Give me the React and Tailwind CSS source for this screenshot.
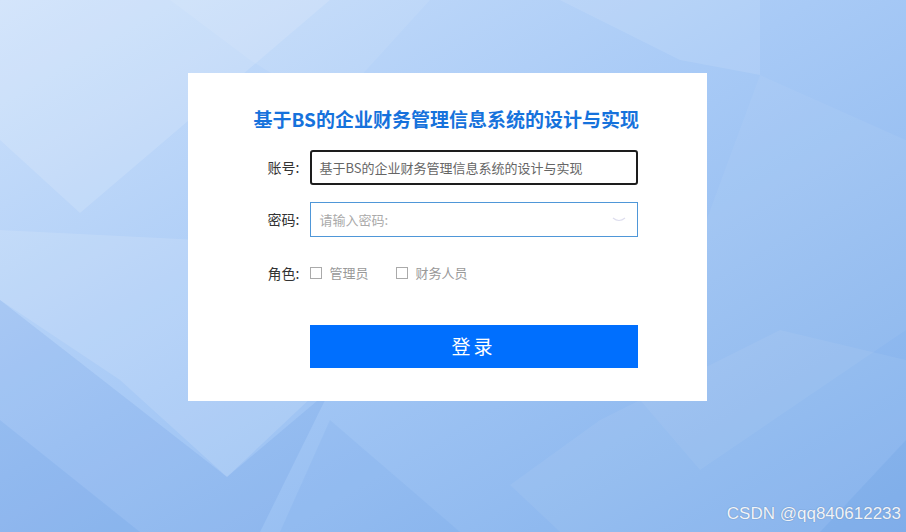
import React, { useState } from 'react';

const font = { fontFamily: '"Noto Sans CJK SC", "Noto Sans", sans-serif' };

function Backdrop() {
  return (
    <svg className="absolute inset-0 w-full h-full" viewBox="0 0 906 532" preserveAspectRatio="none">
      <defs>
        <linearGradient id="bg" x1="0" y1="0" x2="1" y2="1">
          <stop offset="0" stopColor="#cde1fb" />
          <stop offset="0.45" stopColor="#a8caf6" />
          <stop offset="1" stopColor="#80afeb" />
        </linearGradient>
      </defs>
      <rect width="906" height="532" fill="url(#bg)" />
      {/* light facets */}
      <polygon points="0,0 330,0 80,213 0,140" fill="#ffffff" opacity="0.14" />
      <polygon points="170,0 430,0 330,110 250,60" fill="#ffffff" opacity="0.08" />
      <polygon points="560,0 760,0 760,75 680,60" fill="#ffffff" opacity="0.1" />
      <polygon points="0,300 120,380 227,477 330,380 330,300 200,240 0,230" fill="#ffffff" opacity="0.12" />
      <polygon points="0,300 227,477 330,390 260,532 0,532" fill="#3f7fd8" opacity="0.12" />
      <polygon points="0,420 140,532 0,532" fill="#3f7fd8" opacity="0.1" />
      <polygon points="760,75 906,140 906,330 700,470 640,400" fill="#ffffff" opacity="0.05" />
      <polygon points="600,420 780,330 906,360 906,532 560,532 510,485" fill="#ffffff" opacity="0.06" />
      <polygon points="820,532 906,440 906,532" fill="#3f7fd8" opacity="0.1" />
      <polygon points="330,420 460,532 280,532" fill="#3f7fd8" opacity="0.08" />
    </svg>
  );
}

export default function App() {
  const [roles, setRoles] = useState({ admin: false, finance: false });

  return (
    <div className="relative w-[906px] h-[532px] overflow-hidden" style={font}>
      <Backdrop />

      <div className="relative flex justify-center pt-[73px] pr-[12px]">
        <div className="w-[519px] h-[328px] bg-white flex flex-col pl-[80px] pt-[32px]">
          <h1 className="text-[19px] leading-[28px] font-bold text-[#1672dc] -ml-[14px]">
            基于BS的企业财务管理信息系统的设计与实现
          </h1>

          <div className="flex items-center mt-[17px]">
            <span className="w-[42px] text-[14px] text-[#333]">账号:</span>
            <div className="w-[328px] h-[35px] border-2 border-[#1d1d1d] rounded-[3px] flex items-center px-[8px] text-[13px] text-[#666]">
              基于BS的企业财务管理信息系统的设计与实现
            </div>
          </div>

          <div className="flex items-center mt-[17px]">
            <span className="w-[42px] text-[14px] text-[#333]">密码:</span>
            <div className="w-[328px] h-[35px] border border-[#4f97d8] flex items-center justify-between px-[9px] text-[13px] text-[#aaa]">
              <span>请输入密码:</span>
              <svg width="14" height="8" viewBox="0 0 14 8" className="mr-[2px]">
                <path d="M1 2 Q7 7 13 2" fill="none" stroke="#dde" strokeWidth="1.2" />
              </svg>
            </div>
          </div>

          <div className="flex items-center mt-[22px] h-[28px]">
            <span className="w-[42px] text-[14px] text-[#333]">角色:</span>
            <label className="flex items-center gap-[8px] text-[13px] text-[#999] cursor-pointer">
              <span
                className="w-[12px] h-[12px] border border-[#aaa] bg-white"
                onClick={() => setRoles({ ...roles, admin: !roles.admin })}
              />
              管理员
            </label>
            <label className="flex items-center gap-[8px] text-[13px] text-[#999] ml-[27px] cursor-pointer">
              <span
                className="w-[12px] h-[12px] border border-[#aaa] bg-white"
                onClick={() => setRoles({ ...roles, finance: !roles.finance })}
              />
              财务人员
            </label>
          </div>

          <button className="ml-[42px] mt-[38px] w-[328px] h-[43px] bg-[#006ffe] text-white text-[19px] tracking-[3px]">
            登录
          </button>
        </div>
      </div>

      <div
        className="absolute right-[5px] bottom-[6px] text-[17px] text-white/90"
        style={{ fontFamily: '"Liberation Sans", Arial, sans-serif', textShadow: '0 0 1px #6a8fbf, 0 0 1px #6a8fbf' }}
      >
        CSDN @qq840612233
      </div>
    </div>
  );
}
